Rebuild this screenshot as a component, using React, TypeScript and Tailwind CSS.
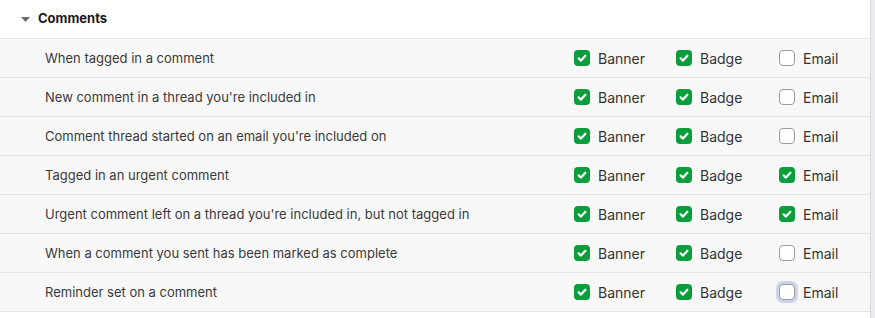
import React from "react";

type Row = { label: string; email: boolean; focus?: boolean };

const rows: Row[] = [
  { label: "When tagged in a comment", email: false },
  { label: "New comment in a thread you're included in", email: false },
  { label: "Comment thread started on an email you're included on", email: false },
  { label: "Tagged in an urgent comment", email: true },
  { label: "Urgent comment left on a thread you're included in, but not tagged in", email: true },
  { label: "When a comment you sent has been marked as complete", email: false },
  { label: "Reminder set on a comment", email: false, focus: true },
];

function Box({ checked, focus }: { checked: boolean; focus?: boolean }) {
  if (checked) {
    return (
      <span className="flex h-[16px] w-[16px] items-center justify-center rounded-[4px] bg-[#0a9d3c]">
        <svg width="12" height="12" viewBox="0 0 12 12" fill="none">
          <path d="M2.6 6.3 L5 8.6 L9.4 3.7" stroke="white" strokeWidth="2.2" strokeLinecap="round" strokeLinejoin="round" />
        </svg>
      </span>
    );
  }
  return (
    <span
      className={
        "block h-[16px] w-[16px] rounded-[4px] border-[1.5px] border-[#9a9a9a] bg-white " +
        (focus ? "ring-[3px] ring-[#ccd6e8]" : "")
      }
    />
  );
}

function Cell({ label, checked, focus, w }: { label: string; checked: boolean; focus?: boolean; w: string }) {
  return (
    <div className={"flex items-center gap-[8px] " + w}>
      <Box checked={checked} focus={focus} />
      <span className="text-[14px] text-[#333]">{label}</span>
    </div>
  );
}

export default function App() {
  return (
    <div className="flex h-[318px] w-[875px] bg-[#ececf0]" style={{ fontFamily: "Inter, 'Noto Sans', sans-serif" }}>
      <div className="h-full w-[871px] border-r border-[#dcdce0] bg-white">
        <div className="flex h-[39px] items-center border-b border-[#e6e6e6] pl-[21px]">
          <svg width="9" height="5" viewBox="0 0 9 5" className="mr-[8px] mt-[1px]">
            <path d="M0 0 L9 0 L4.5 5 Z" fill="#6b6b6b" />
          </svg>
          <span className="text-[13px] font-bold text-[#1a1a1a]">Comments</span>
        </div>
        {rows.map((r, i) => (
          <div key={i} className="flex h-[39px] items-center border-b border-[#e6e6e6] bg-[#f8f8f8]">
            <div className="flex-1 pl-[45px] pt-[1px] text-[13px] text-[#3a3a3a]">{r.label}</div>
            <Cell label="Banner" checked w="w-[102px]" />
            <Cell label="Badge" checked w="w-[103px]" />
            <Cell label="Email" checked={r.email} focus={r.focus} w="w-[91px]" />
          </div>
        ))}
      </div>
    </div>
  );
}
